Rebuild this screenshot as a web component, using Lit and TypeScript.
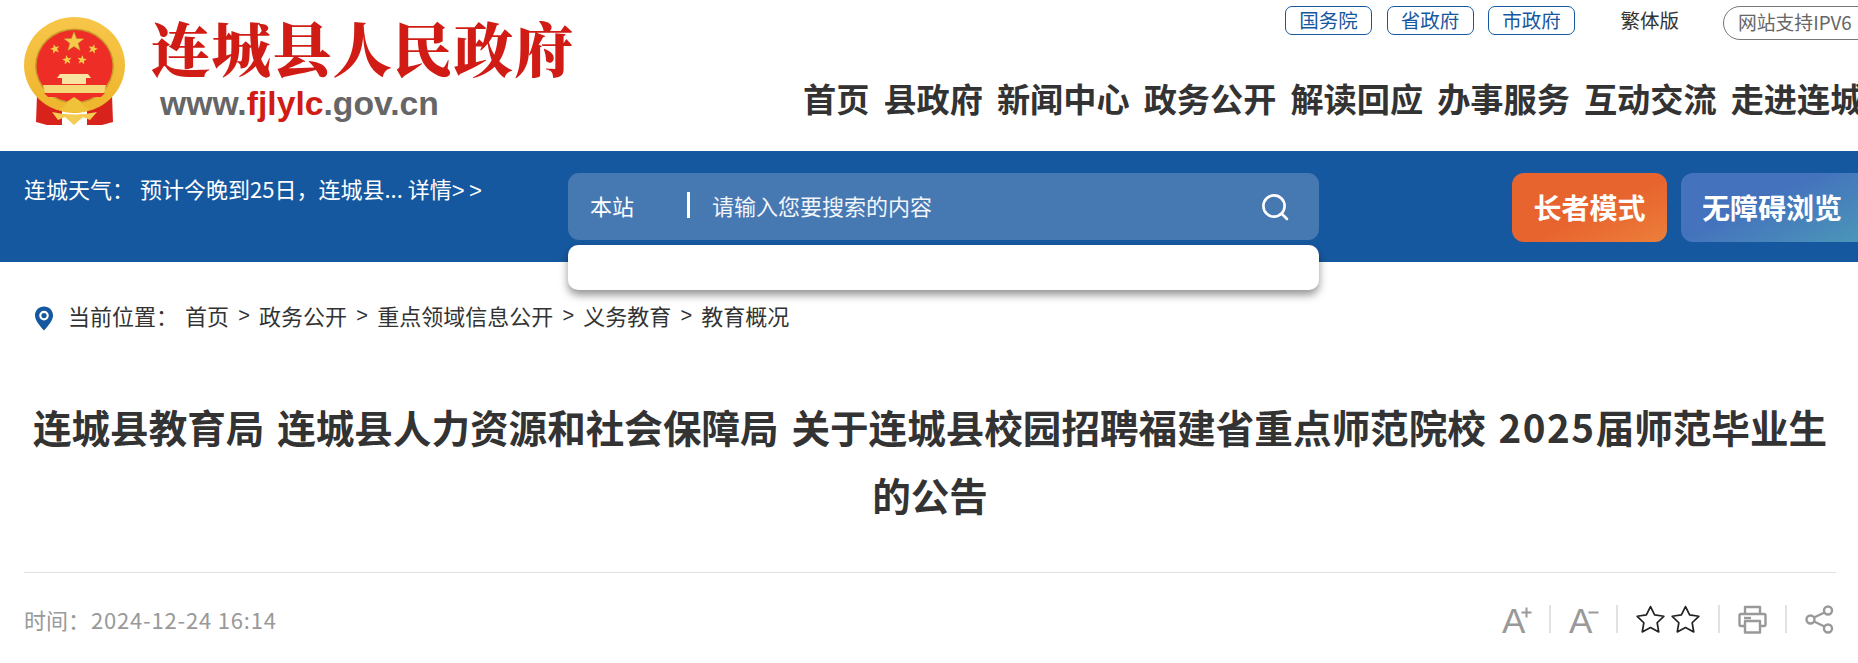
import { LitElement, html, css, svg } from "lit";
import { customElement } from "lit/decorators.js";

const star = (cx: number, cy: number, r: number, rot = 0, inner = 0.42) => {
  const pts: string[] = [];
  for (let i = 0; i < 10; i++) {
    const rad = i % 2 === 0 ? r : r * inner;
    const a = ((-90 + rot + i * 36) * Math.PI) / 180;
    pts.push(`${(cx + rad * Math.cos(a)).toFixed(2)},${(cy + rad * Math.sin(a)).toFixed(2)}`);
  }
  return pts.join(" ");
};

const emblem = svg`
  <defs>
    <linearGradient id="gold" x1="0" y1="0" x2="0" y2="1">
      <stop offset="0" stop-color="#f7c64a"/><stop offset="1" stop-color="#eeb52c"/>
    </linearGradient>
  </defs>
  <path d="M37 95 L36 122 L47 125 L62 125 L62 100 Z" fill="#d8231c"/>
  <path d="M112 95 L113 122 L102 125 L87 125 L87 100 Z" fill="#d8231c"/>
  <ellipse cx="74.5" cy="65" rx="50.5" ry="48" fill="url(#gold)"/>
  <ellipse cx="74.5" cy="66" rx="39.5" ry="37.5" fill="#c99a2a"/>
  <ellipse cx="74.5" cy="66" rx="38" ry="36" fill="#ee2e26"/>
  <polygon points="${star(74, 42, 10.5)}" fill="#f5cb4c" stroke="#b9852a" stroke-width=".5"/>
  <polygon points="${star(55, 49, 5, -15)}" fill="#f5cb4c"/>
  <polygon points="${star(93, 49, 5, 15)}" fill="#f5cb4c"/>
  <polygon points="${star(67, 60, 5, -8)}" fill="#f5cb4c"/>
  <polygon points="${star(82, 60, 5, 8)}" fill="#f5cb4c"/>
  <path d="M60 74 L88 74 L91 78 L86 78 L86 84 L62 84 L62 78 L57 78 Z" fill="#f9e3a0"/>
  <path d="M43 85 L106 85 L104 93 L45 93 Z" fill="#f6d778"/>
  <path d="M44 93 L105 93 L101 97 L48 97 Z" fill="#ee2e26"/>
  <path d="M63 108 L68 101 L74 97 L80 101 L86 108 L90 108 L84 112 L65 112 L59 108 Z" fill="#f0c23a"/>
  <path d="M52 112 Q74 117 97 112 L90 120 L83 117 L74 125 L65 117 L58 120 Z" fill="#f4cc52"/>
`;

const starIcon = svg`<polygon points="${star(14.5, 15.6, 14, 0, 0.5)}" fill="none" stroke="#222" stroke-width="1.7" stroke-linejoin="round"/>`;

@customElement("app-root")
export class AppRoot extends LitElement {
  static styles = css`
    :host {
      display: block;
      width: 1858px;
      height: 663px;
      overflow: hidden;
      background: #fff;
      font-family: "Noto Sans CJK SC", "Noto Sans", sans-serif;
      color: #333;
    }
    a { color: inherit; text-decoration: none; }
    .header { display: flex; height: 151px; }
    .logo { flex: 0 0 803px; display: flex; align-items: flex-start; padding: 5px 0 0 14px; box-sizing: border-box; }
    .emblem { width: 130px; height: 125px; flex: none; margin-left: -4px; }
    .logo-text { margin-left: 11px; }
    .logo-name {
      font-family: "Noto Serif CJK SC", "Noto Sans CJK SC", serif;
      font-size: 59.5px; line-height: 60px; font-weight: 900; color: #d01c14;
      white-space: nowrap; margin-top: 12px; letter-spacing: 1px;
    }
    .logo-url {
      font-family: "Liberation Sans", sans-serif; font-weight: 700; font-size: 33.7px; line-height: 36px;
      color: #666; margin: 8px 0 0 9px; white-space: nowrap;
    }
    .logo-url span { color: #d01c14; }
    .hright { flex: none; width: 1055px; overflow: hidden; }
    .toplinks { display: flex; align-items: flex-start; padding: 6px 0 0 482px; height: 34px; white-space: nowrap; }
    .tl {
      display: block; flex: none; box-sizing: border-box; width: 87px; height: 29px; line-height: 26px; text-align: center;
      border: 1px solid #16589f; border-radius: 7px; color: #16589f; font-size: 19.5px; margin-right: 14.5px;
    }
    .trad { flex: none; font-size: 19.5px; line-height: 28px; margin: 0 44px 0 31px; color: #333; }
    .ipv6 {
      box-sizing: border-box; height: 34px; line-height: 30px; width: 160px; padding-left: 14px;
      border: 1px solid #777; border-radius: 17px; font-size: 18.8px; color: #666; flex: none;
    }
    .nav { display: flex; gap: 14px; margin-top: 36px; white-space: nowrap; }
    .nav a { font-size: 33.2px; line-height: 44px; font-weight: 700; color: #333; flex: none; }

    .bar { height: 111px; background: #16589f; display: flex; align-items: flex-start; color: #fff; }
    .weather { flex: 0 0 568px; box-sizing: border-box; padding: 22px 0 0 24px; font-size: 22px; line-height: 30px; white-space: nowrap; display: flex; }
    .weather .lab { margin-right: 6px; }
    .weather .more { letter-spacing: 4.5px; font-family: "Liberation Sans", sans-serif; }
    .search { flex: 0 0 751px; margin-top: 22px; position: relative; }
    .sbox {
      height: 67px; border-radius: 11px; background: #4678b2; display: flex; align-items: center; font-size: 22px; color: #fff; padding: 0 0 3px 22px; box-sizing: border-box;
    }
    .scope { width: 97px; }
    .divd { width: 3px; height: 26px; background: #fff; margin: 0 22px 0 0; }
    .ph { flex: 1; color: #f2f5fa; font-size: 22px; }
    .sicon { width: 30px; height: 30px; margin: 3px 29px 0 0; flex: none; }
    .drop {
      position: absolute; left: 0; right: 0; top: 72px; height: 45px; background: #fff; border-radius: 10px;
      box-shadow: 0 5px 9px rgba(0, 0, 0, 0.42);
    }
    .btns { display: flex; gap: 14px; margin: 22px 0 0 193px; white-space: nowrap; }
    .btn {
      flex: none; height: 69px; line-height: 69px; text-align: center; font-size: 28px; font-weight: 700; color: #fff; border-radius: 12px;
    }
    .elder { width: 155px; background: linear-gradient(155deg, #e8642f 55%, #ec7f3a 100%); }
    .access { width: 190px; text-align: left; padding-left: 21px; box-sizing: border-box; background: linear-gradient(155deg, #4472bd 40%, #4b98b8 100%); }

    .crumb { display: flex; align-items: center; height: 34px; margin: 36px 0 0 34px; font-size: 22px; color: #333; white-space: nowrap; }
    .pin { width: 20px; height: 25px; margin: 6px 14px 0 0; flex: none; }
    .crumb .lab { margin-right: 7px; }
    .crumb .sep { font-family: "Liberation Sans", sans-serif; margin: 0 9.2px; font-size: 20px; }

    .main { padding: 0 22px 0 24px; }
    h1 {
      margin: 60px 0 0; font-size: 38.6px; line-height: 68px; font-weight: 700; color: #333; text-align: center; word-spacing: 4px;
    }
    h1 .yr { letter-spacing: 1.5px; }
    .rule { height: 1px; background: #e1e1e1; margin-top: 44px; }
    .meta { display: flex; align-items: center; justify-content: space-between; height: 64px; padding-top: 28px; box-sizing: border-box; }
    .time { font-size: 22px; color: #999; white-space: nowrap; letter-spacing: 0.8px; }
    .time .k { letter-spacing: 0; margin-right: 1px; }
    .tools { display: flex; align-items: center; margin-right: 2px; }
    .aa { display: flex; align-items: flex-start; width: 29px; height: 28px; }
    .aa b { font-family: "Liberation Sans", sans-serif; font-weight: 400; font-size: 35px; line-height: 36px; color: #999; margin-top: -2px; }
    .aa svg { width: 11px; height: 11px; margin: 2px 0 0 -4px; flex: none; }
    .vsep { width: 2px; height: 28px; background: #e2e2e2; margin: 0 18px; flex: none; }
    .ico { width: 29px; height: 29px; flex: none; display: block; }
    .stars { display: flex; gap: 6px; }
  `;

  render() {
    const nav = ["首页", "县政府", "新闻中心", "政务公开", "解读回应", "办事服务", "互动交流", "走进连城"];
    return html`
      <div class="header">
        <div class="logo">
          <svg class="emblem" viewBox="10 5 130 125" role="img" aria-label="国徽">${emblem}</svg>
          <div class="logo-text">
            <div class="logo-name">连城县人民政府</div>
            <div class="logo-url">www.<span>fjlylc</span>.gov.cn</div>
          </div>
        </div>
        <div class="hright">
          <div class="toplinks">
            <a class="tl">国务院</a><a class="tl">省政府</a><a class="tl">市政府</a>
            <a class="trad">繁体版</a>
            <div class="ipv6">网站支持IPV6</div>
          </div>
          <div class="nav">${nav.map((n) => html`<a>${n}</a>`)}</div>
        </div>
      </div>

      <div class="bar">
        <div class="weather"><span class="lab">连城天气：</span><span>预计今晚到25日，连城县... 详情<span class="more">&gt;&gt;</span></span></div>
        <div class="search">
          <div class="sbox">
            <span class="scope">本站</span>
            <span class="divd"></span>
            <span class="ph">请输入您要搜索的内容</span>
            <svg class="sicon" viewBox="0 0 30 30" fill="none" stroke="#fff" stroke-width="2.6" stroke-linecap="round">
              <circle cx="14" cy="14" r="10.6"/><path d="M22 22 L27 27"/>
            </svg>
          </div>
          <div class="drop"></div>
        </div>
        <div class="btns">
          <div class="btn elder">长者模式</div>
          <div class="btn access">无障碍浏览</div>
        </div>
      </div>

      <div class="crumb">
        <svg class="pin" viewBox="0 0 20 25">
          <path fill-rule="evenodd" fill="#16589f" d="M10 0.5 C4.8 0.5 1 4.4 1 9.4 C1 15 6.5 20 10 24.5 C13.5 20 19 15 19 9.4 C19 4.4 15.2 0.5 10 0.5 Z M10 4.8 A4.8 4.8 0 1 1 10 14.4 A4.8 4.8 0 1 1 10 4.8 Z"/>
          <circle cx="10" cy="9.6" r="2.6" fill="#16589f"/>
        </svg>
        <span class="lab">当前位置：</span>
        <a>首页</a><span class="sep">&gt;</span><a>政务公开</a><span class="sep">&gt;</span><a>重点领域信息公开</a><span class="sep">&gt;</span><a>义务教育</a><span class="sep">&gt;</span><a>教育概况</a>
      </div>

      <div class="main">
        <h1>连城县教育局 连城县人力资源和社会保障局 关于连城县校园招聘福建省重点师范院校 <span class="yr">2025</span>届师范毕业生的公告</h1>
        <div class="rule"></div>
        <div class="meta">
          <div class="time"><span class="k">时间：</span>2024-12-24 16:14</div>
          <div class="tools">
            <div class="aa"><b>A</b><svg viewBox="0 0 11 11"><path d="M5.5 0.5 V10.5 M0.5 5.5 H10.5" stroke="#999" stroke-width="2"/></svg></div>
            <span class="vsep"></span>
            <div class="aa"><b>A</b><svg viewBox="0 0 11 11"><path d="M0.5 5.5 H10.5" stroke="#999" stroke-width="2"/></svg></div>
            <span class="vsep"></span>
            <div class="stars">
              <svg class="ico" viewBox="0 0 29 29">${starIcon}</svg>
              <svg class="ico" viewBox="0 0 29 29">${starIcon}</svg>
            </div>
            <span class="vsep"></span>
            <svg class="ico" viewBox="0 0 29 29" fill="none" stroke="#999" stroke-width="2.4" stroke-linejoin="round">
              <path d="M7 9 V2 H22 V9"/>
              <path d="M7 21 H3 Q1.5 21 1.5 19.5 V10.5 Q1.5 9 3 9 H26 Q27.5 9 27.5 10.5 V19.5 Q27.5 21 26 21 H22"/>
              <rect x="7" y="16" width="15" height="11.5"/>
              <path d="M6 13 H13"/>
            </svg>
            <span class="vsep"></span>
            <svg class="ico" viewBox="0 0 29 29" fill="none" stroke="#999" stroke-width="2.4">
              <circle cx="5.5" cy="14.5" r="4"/><circle cx="23" cy="5.5" r="4"/><circle cx="23" cy="23.5" r="4"/>
              <path d="M9 12.5 L19.5 7.5 M9 16.5 L19.5 21.5"/>
            </svg>
          </div>
        </div>
      </div>
    `;
  }
}
